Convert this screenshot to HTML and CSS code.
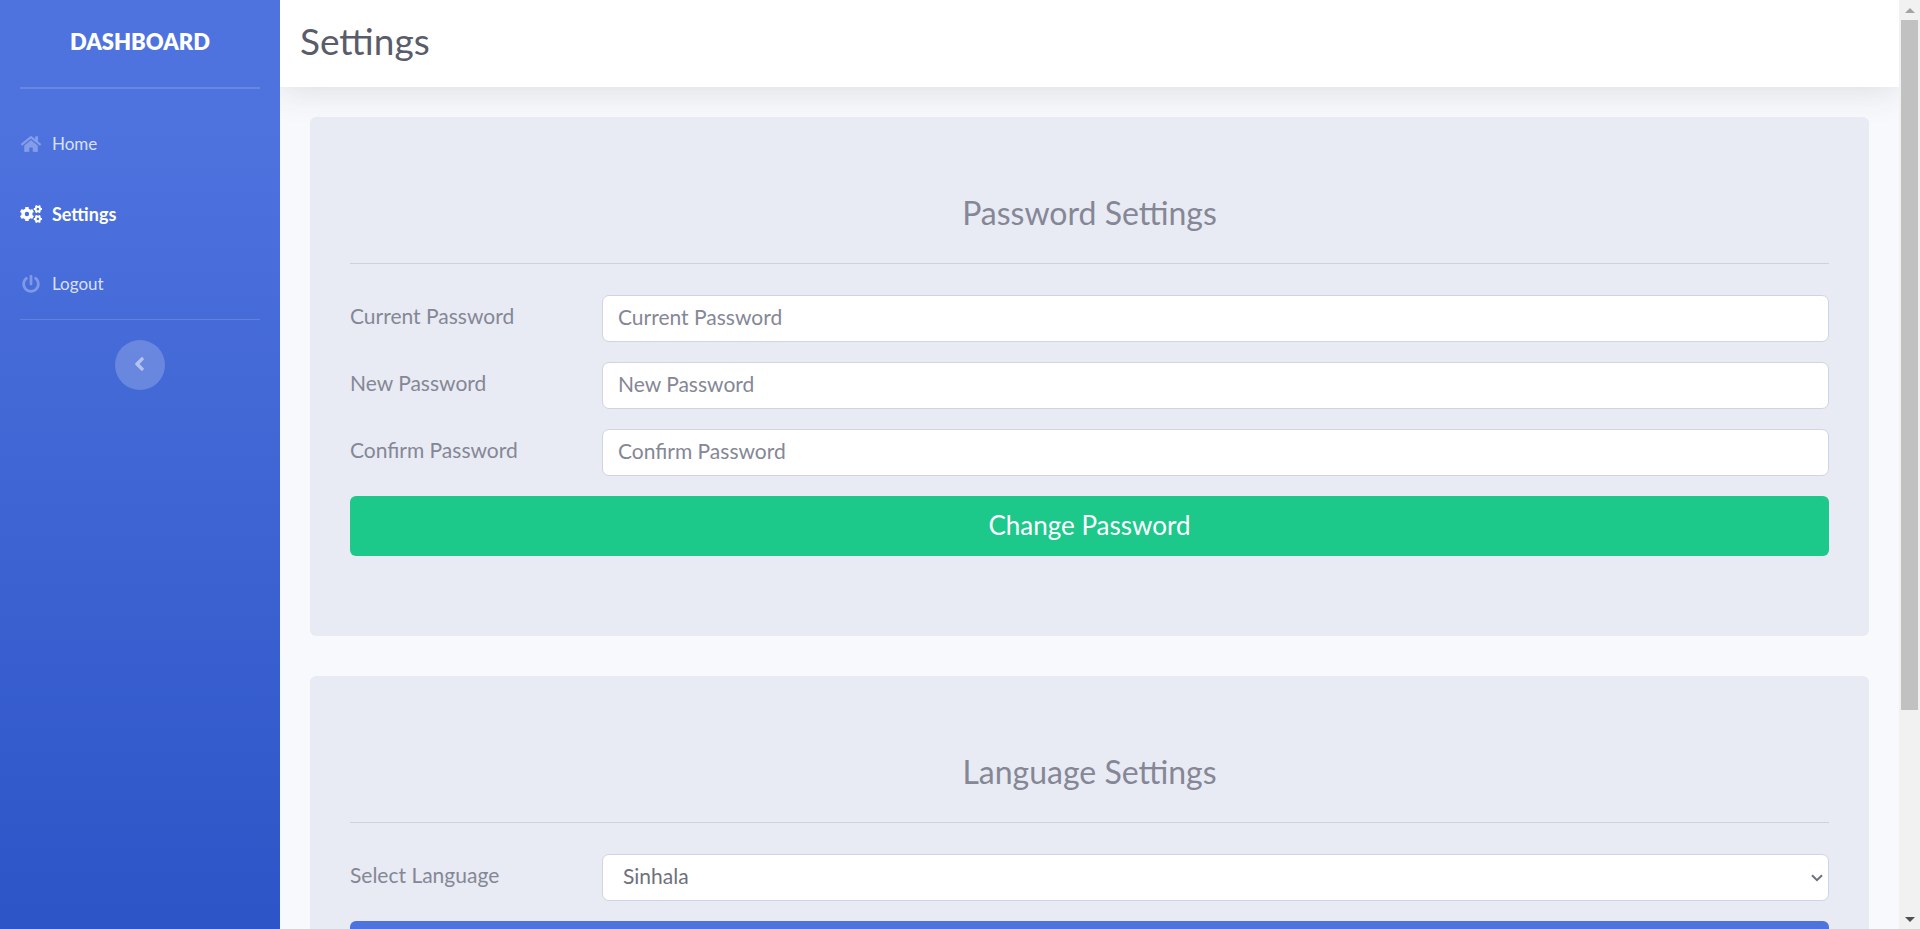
FILE: index.html
```html
<!DOCTYPE html>
<html lang="en">
<head>
<meta charset="utf-8">
<title>Settings</title>
<link rel="stylesheet" href="styles.css">
</head>
<body>
<div class="window">
  <div class="viewport">
    <div class="layout">
      <nav class="sidebar">
        <a class="brand" href="#">DASHBOARD</a>
        <hr class="divider divider-top">
        <ul class="nav">
          <li><a class="nav-link" href="#">
            <svg class="nav-icon" viewBox="0 0 576 512"><path d="M280.37 148.26L96 300.11V464a16 16 0 0 0 16 16l112.06-.29a16 16 0 0 0 15.92-16V368a16 16 0 0 1 16-16h64a16 16 0 0 1 16 16v95.64a16 16 0 0 0 16 16.05L464 480a16 16 0 0 0 16-16V300L295.67 148.26a12.19 12.19 0 0 0-15.3 0zM571.6 251.47L488 182.56V44.05a12 12 0 0 0-12-12h-56a12 12 0 0 0-12 12v72.61L318.47 43a48 48 0 0 0-61 0L4.34 251.47a12 12 0 0 0-1.6 16.9l25.5 31A12 12 0 0 0 45.15 301l235.22-193.74a12.19 12.19 0 0 1 15.3 0L530.9 301a12 12 0 0 0 16.9-1.6l25.5-31a12 12 0 0 0-1.7-16.93z"/></svg>
            <span>Home</span></a></li>
          <li><a class="nav-link active" href="#">
            <svg class="nav-icon" viewBox="0 0 640 512">
              <defs>
                <g id="gear">
                  <circle r="113" fill="none" stroke="currentColor" stroke-width="98"/>
                  <g id="teeth"><rect x="-52" y="-206" width="104" height="80" rx="16"/><rect x="-52" y="126" width="104" height="80" rx="16"/></g>
                  <use href="#teeth" transform="rotate(60)"/>
                  <use href="#teeth" transform="rotate(120)"/>
                </g>
              </defs>
              <use href="#gear" transform="translate(202 256)"/>
              <use href="#gear" transform="translate(520 112) rotate(30) scale(.58)"/>
              <use href="#gear" transform="translate(520 400) rotate(30) scale(.58)"/>
            </svg>
            <span>Settings</span></a></li>
          <li><a class="nav-link" href="#">
            <svg class="nav-icon" viewBox="0 0 512 512"><path d="M400 54.1c63 45 104 118.6 104 201.9 0 136.8-110.8 247.7-247.5 248C120 504.3 8.2 393 8 256.4 7.9 173.1 48.9 99.3 111.8 54.2c11.7-8.3 28-4.8 35 7.7L162.6 90c5.9 10.5 3.1 23.8-6.6 31-41.5 30.8-68 79.6-68 134.9-.1 92.3 74.5 168.1 168 168.1 91.6 0 168.6-74.2 168-169.1-.3-51.8-24.7-101.8-68.1-134-9.7-7.2-12.4-20.5-6.5-30.9l15.8-28.1c7-12.4 23.2-16.1 34.8-7.8zM296 264V24c0-13.3-10.7-24-24-24h-32c-13.3 0-24 10.7-24 24v240c0 13.3 10.7 24 24 24h32c13.3 0 24-10.7 24-24z"/></svg>
            <span>Logout</span></a></li>
        </ul>
        <hr class="divider">
        <button class="toggle" type="button" aria-label="Collapse sidebar">
          <svg class="toggle-icon" viewBox="0 0 256 512"><path d="M31.7 239l136-136c9.4-9.4 24.6-9.4 33.9 0l22.6 22.6c9.4 9.4 9.4 24.6 0 33.9L127.9 256l96.4 96.4c9.4 9.4 9.4 24.6 0 33.9L201.7 409c-9.4 9.4-24.6 9.4-33.9 0l-136-136c-9.5-9.4-9.5-24.6-.1-34z"/></svg>
        </button>
      </nav>
      <div class="content">
        <header class="topbar"><h1 class="page-title">Settings</h1></header>
        <main class="main">
          <form class="card">
            <h2 class="card-title">Password Settings</h2>
            <hr class="card-rule">
            <div class="fields">
              <div class="field">
                <label class="label" for="current">Current Password</label>
                <input class="control" id="current" type="password" placeholder="Current Password">
              </div>
              <div class="field">
                <label class="label" for="new">New Password</label>
                <input class="control" id="new" type="password" placeholder="New Password">
              </div>
              <div class="field">
                <label class="label" for="confirm">Confirm Password</label>
                <input class="control" id="confirm" type="password" placeholder="Confirm Password">
              </div>
              <button class="btn btn-success" type="button">Change Password</button>
            </div>
          </form>
          <form class="card">
            <h2 class="card-title">Language Settings</h2>
            <hr class="card-rule">
            <div class="fields">
              <div class="field">
                <label class="label" for="language">Select Language</label>
                <div class="select-wrap">
                  <select class="control select" id="language"><option>Sinhala</option></select>
                  <svg class="select-arrow" viewBox="0 0 12 8"><path d="M1 1.2l5 5 5-5"/></svg>
                </div>
              </div>
              <button class="btn btn-primary" type="button" aria-label="Change Language"></button>
            </div>
          </form>
        </main>
      </div>
    </div>
  </div>
  <div class="scrollbar" aria-hidden="true">
    <svg class="scroll-arrow scroll-up" viewBox="0 0 10 5"><path d="M0 5l5-5 5 5z"/></svg>
    <div class="track"><div class="thumb"></div></div>
    <svg class="scroll-arrow" viewBox="0 0 10 5"><path d="M0 0h10l-5 5z"/></svg>
  </div>
</div>
</body>
</html>
```
FILE: styles.css
```css
* { box-sizing: border-box; }
body {
  margin: 0;
  font: 400 21px/30px Lato, "Open Sans", sans-serif;
  color: #858796;
}
button, input, select { font: inherit; }
hr { margin: 0; border: 0; }

.window { display: flex; height: 100vh; overflow: hidden; }
.viewport { flex: 1; min-width: 0; overflow-y: auto; scrollbar-width: none; }
.layout { display: flex; min-height: 100%; background: #f8f9fc; }

.sidebar {
  flex: none;
  width: 280px;
  display: flex;
  flex-direction: column;
  background: linear-gradient(180deg, #4e73df 10%, #224abe 100%);
}
.brand {
  display: flex;
  align-items: center;
  justify-content: center;
  height: 87px;
  padding-bottom: 4px;
  color: #fff;
  font-size: 22px;
  font-weight: 800;
  text-decoration: none;
}
.divider { margin: 0 20px; height: 1px; background: rgba(255, 255, 255, .15); }
.divider-top { height: 2px; margin-bottom: 20px; }
.nav { margin: 0; padding: 0; list-style: none; }
.nav-link {
  display: flex;
  align-items: center;
  gap: 10px;
  height: 70px;
  padding: 0 20px 1px;
  color: rgba(255, 255, 255, .8);
  font-size: 17px;
  text-decoration: none;
}
.nav-icon { width: 22px; height: 18px; fill: currentColor; opacity: .38; }
.active { color: #fff; font-size: 18px; font-weight: 700; }
.active .nav-icon { opacity: 1; }
.toggle {
  display: grid;
  place-items: center;
  align-self: center;
  width: 50px;
  height: 50px;
  margin-top: 20px;
  padding: 0 2px 2px 0;
  border: 0;
  border-radius: 50%;
  background: rgba(255, 255, 255, .2);
}
.toggle-icon { width: 11px; height: 22px; fill: rgba(255, 255, 255, .5); }

.content { flex: 1; min-width: 0; display: flex; flex-direction: column; overflow: hidden; }
.topbar {
  display: flex;
  align-items: center;
  height: 87px;
  padding: 0 20px 5px;
  background: #fff;
  box-shadow: 0 3px 35px rgba(58, 59, 69, .15);
}
.page-title { margin: 0; font-size: 37px; line-height: 42px; font-weight: 400; color: #5a5c69; }
.main { display: grid; gap: 40px; padding: 30px 30px 136px; }

.card { position: relative; padding: 80px 40px; border-radius: 6px; background: #e8ebf3; }
.card-title { margin: 0 0 34px; font-size: 32px; line-height: 32px; font-weight: 400; text-align: center; }
.card-rule { height: 1px; margin-bottom: 31px; background: #cfd2de; }
.fields { display: grid; gap: 20px; }
.field { display: grid; grid-template-columns: 232px 1fr; gap: 20px; align-items: center; }
.label { padding-bottom: 5px; }
.control {
  display: block;
  width: 100%;
  height: 47px;
  padding: 0 15px 4px;
  border: 1px solid #d1d3e2;
  border-radius: 7px;
  background: #fff;
  color: #6e707e;
}
.control::placeholder { color: #858796; opacity: 1; }
.select-wrap { position: relative; }
.select { appearance: none; padding-left: 20px; }
.select-arrow {
  position: absolute;
  right: 6px;
  top: 20px;
  width: 12px;
  height: 8px;
  fill: none;
  stroke: #6e707e;
  stroke-width: 2;
  pointer-events: none;
}
.btn { height: 60px; padding: 0 20px 3px; border: 0; border-radius: 6px; color: #fff; font-size: 26px; }
.btn-success { background: #1cc88a; }
.btn-primary { background: #4e73df; }

.scrollbar {
  flex: none;
  width: 21px;
  display: flex;
  flex-direction: column;
  align-items: center;
  padding: 8px 0 7px;
  background: #f1f1f1;
}
.scroll-arrow { width: 10px; height: 5px; fill: #505050; }
.scroll-up { fill: #a3a3a3; }
.track { flex: 1; width: 17px; margin: 7px 0; }
.thumb { height: 77.5%; background: #c1c1c1; }
```
